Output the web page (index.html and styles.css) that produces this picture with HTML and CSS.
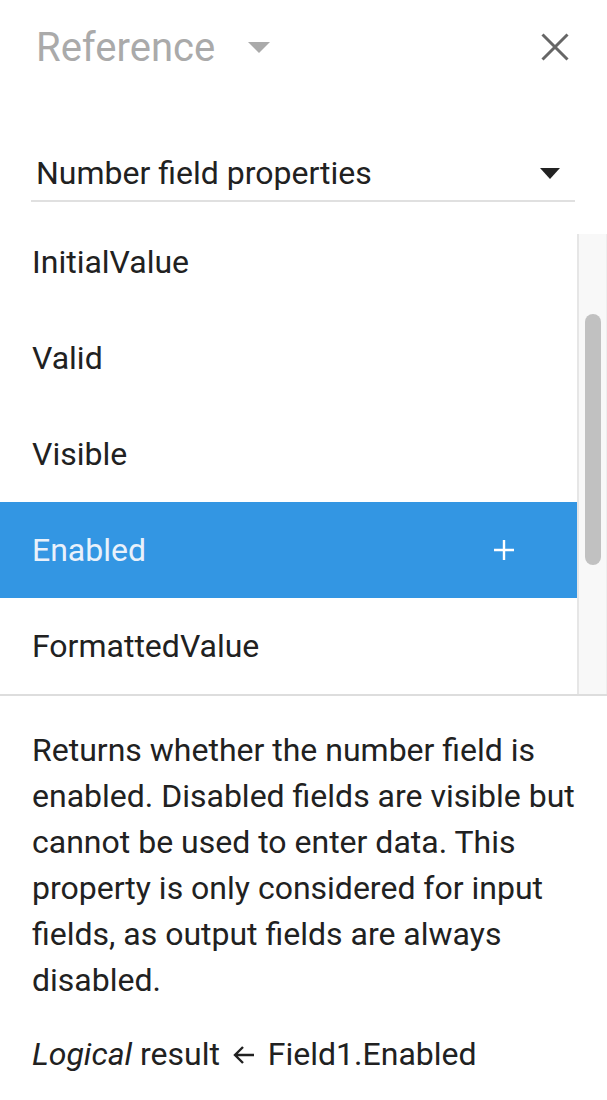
FILE: index.html
```html
<!DOCTYPE html>
<html lang="en">
<head>
  <meta charset="UTF-8" />
  <meta name="viewport" content="width=device-width, initial-scale=1.0"/>
  <title>Reference</title>
  <link rel="stylesheet" href="styles.css">
</head>
<body>
  <div class="header">
    <div class="title">Reference</div>
    <span class="title-caret"></span>
    <svg class="close" width="28" height="28" viewBox="0 0 28 28">
      <path d="M1.5 1.5 L26.5 26.5 M26.5 1.5 L1.5 26.5" stroke="#666" stroke-width="3" fill="none"/>
    </svg>
  </div>

  <div class="select">
    <span class="select-label">Number field properties</span>
    <span class="select-caret"></span>
  </div>

  <div class="list-box">
    <div class="list">
      <div class="list-inner">
        <div class="item">InitialValue</div>
        <div class="item">Valid</div>
        <div class="item">Visible</div>
        <div class="item selected">
          <span>Enabled</span>
          <svg class="plus" width="20" height="20" viewBox="0 0 20 20">
            <path d="M10 0 V20 M0 10 H20" stroke="#fff" stroke-width="2.4" fill="none"/>
          </svg>
        </div>
        <div class="item">FormattedValue</div>
      </div>
    </div>
    <div class="scrollbar">
      <div class="thumb"></div>
    </div>
  </div>

  <div class="help">
    <p class="desc">Returns whether the number field is enabled. Disabled fields are visible but cannot be used to enter data. This property is only considered for input fields, as output fields are always disabled.</p>
    <p class="usage"><em>Logical</em> result
      <svg class="arrow" width="24" height="20" viewBox="0 0 24 20">
        <path d="M22 10 H3 M11 2 L3 10 L11 18" stroke="#212121" stroke-width="2.4" fill="none"/>
      </svg>
      Field1.Enabled</p>
  </div>
</body>
</html>
```

FILE: styles.css
```css
body {
  margin: 0;
  font-family: Roboto, "Noto Sans", sans-serif;
  color: #212121;
  background: #fff;
}
.header {
  display: flex;
  align-items: center;
  height: 94px;
  padding: 0 38px 0 36px;
}
.title {
  font-size: 40px;
  color: #aaa;
}
.title-caret {
  width: 0;
  height: 0;
  border-left: 11px solid transparent;
  border-right: 11px solid transparent;
  border-top: 11px solid #aaa;
  margin-left: 33px;
}
.close {
  margin-left: auto;
}
.select {
  display: flex;
  align-items: center;
  height: 54px;
  margin: 52px 32px 0 31px;
  padding: 0 15px 0 5px;
  border-bottom: 2px solid #e0e0e0;
  font-size: 32px;
}
.select-caret {
  margin-left: auto;
  width: 0;
  height: 0;
  border-left: 10px solid transparent;
  border-right: 10px solid transparent;
  border-top: 11px solid #222;
}
.list-box {
  display: flex;
  height: 460px;
  margin-top: 32px;
  border-bottom: 2px solid #ddd;
}
.list {
  flex: 1;
  overflow: hidden;
}
.list-inner {
  margin-top: -20px;
}
.item {
  display: flex;
  align-items: center;
  height: 96px;
  padding: 0 63px 0 32px;
  font-size: 32px;
}
.item.selected {
  background: #3396e3;
  color: #e9f1fb;
}
.plus {
  margin-left: auto;
}
.scrollbar {
  width: 27px;
  background: #f8f8f8;
  border-left: 2px solid #e6e6e6;
  border-right: 1px solid #eee;
}
.thumb {
  width: 16px;
  height: 251px;
  margin: 80px 0 0 6px;
  background: #c1c1c1;
  border-radius: 8px;
}
.help {
  padding: 31px 28px 0 32px;
  font-size: 32px;
  line-height: 46px;
}
.help p {
  margin: 0;
}
.usage {
  margin-top: 28px !important;
}
.arrow {
  margin: 0 4px;
}
```
